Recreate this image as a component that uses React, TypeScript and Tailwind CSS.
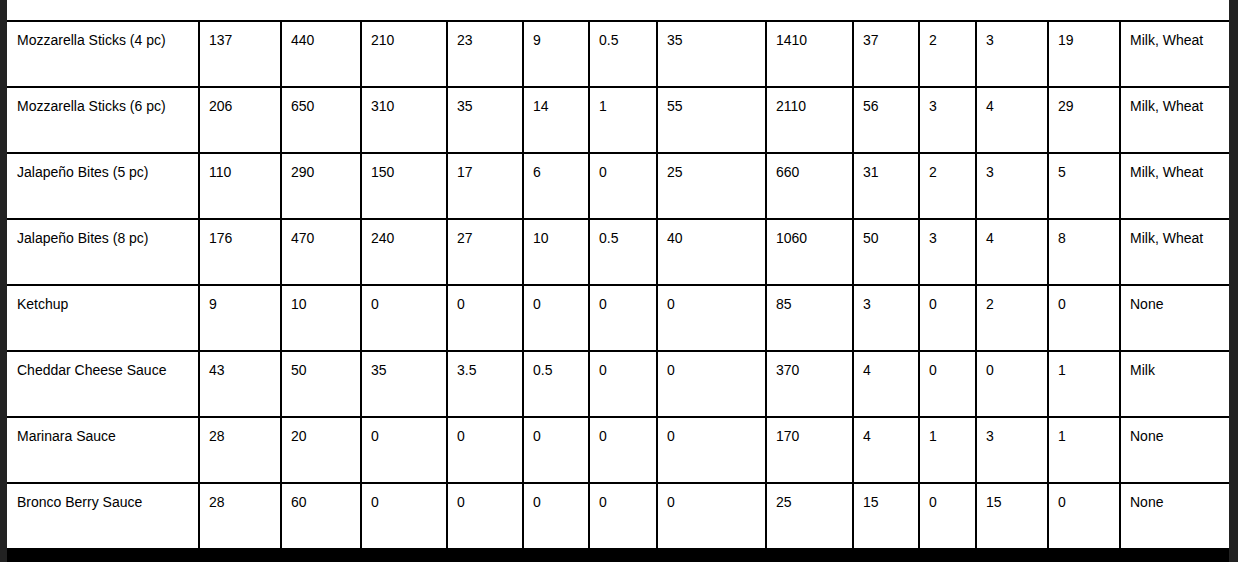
import React from "react";

const widths = [191, 82, 80, 86, 76, 66, 68, 109, 87, 66, 57, 72, 72, 110];

const rows: string[][] = [
  ["Mozzarella Sticks (4 pc)", "137", "440", "210", "23", "9", "0.5", "35", "1410", "37", "2", "3", "19", "Milk, Wheat"],
  ["Mozzarella Sticks (6 pc)", "206", "650", "310", "35", "14", "1", "55", "2110", "56", "3", "4", "29", "Milk, Wheat"],
  ["Jalapeño Bites (5 pc)", "110", "290", "150", "17", "6", "0", "25", "660", "31", "2", "3", "5", "Milk, Wheat"],
  ["Jalapeño Bites (8 pc)", "176", "470", "240", "27", "10", "0.5", "40", "1060", "50", "3", "4", "8", "Milk, Wheat"],
  ["Ketchup", "9", "10", "0", "0", "0", "0", "0", "85", "3", "0", "2", "0", "None"],
  ["Cheddar Cheese Sauce", "43", "50", "35", "3.5", "0.5", "0", "0", "370", "4", "0", "0", "1", "Milk"],
  ["Marinara Sauce", "28", "20", "0", "0", "0", "0", "0", "170", "4", "1", "3", "1", "None"],
  ["Bronco Berry Sauce", "28", "60", "0", "0", "0", "0", "0", "25", "15", "0", "15", "0", "None"],
];

export default function App() {
  return (
    <div
      className="flex h-[562px] w-[1238px] overflow-hidden bg-[#222222]"
      style={{ fontFamily: '"Liberation Sans", Arial, sans-serif' }}
    >
      <div className="ml-[7px] flex w-[1222px] flex-col bg-white">
        <div className="h-[20px] shrink-0" />
        {rows.map((r, ri) => (
          <div key={ri} className="flex h-[66px] shrink-0 border-t-2 border-black">
            {r.map((c, ci) => (
              <div
                key={ci}
                style={{ width: widths[ci] }}
                className={
                  ci === 0
                    ? "shrink-0 pl-[10px] pt-[10px] text-[14px] leading-[16px] text-black whitespace-nowrap"
                    : "shrink-0 border-l-2 border-black pl-[9px] pt-[10px] text-[14px] leading-[16px] text-black whitespace-nowrap"
                }
              >
                {c}
              </div>
            ))}
          </div>
        ))}
        <div className="flex-1 bg-black" />
      </div>
    </div>
  );
}
